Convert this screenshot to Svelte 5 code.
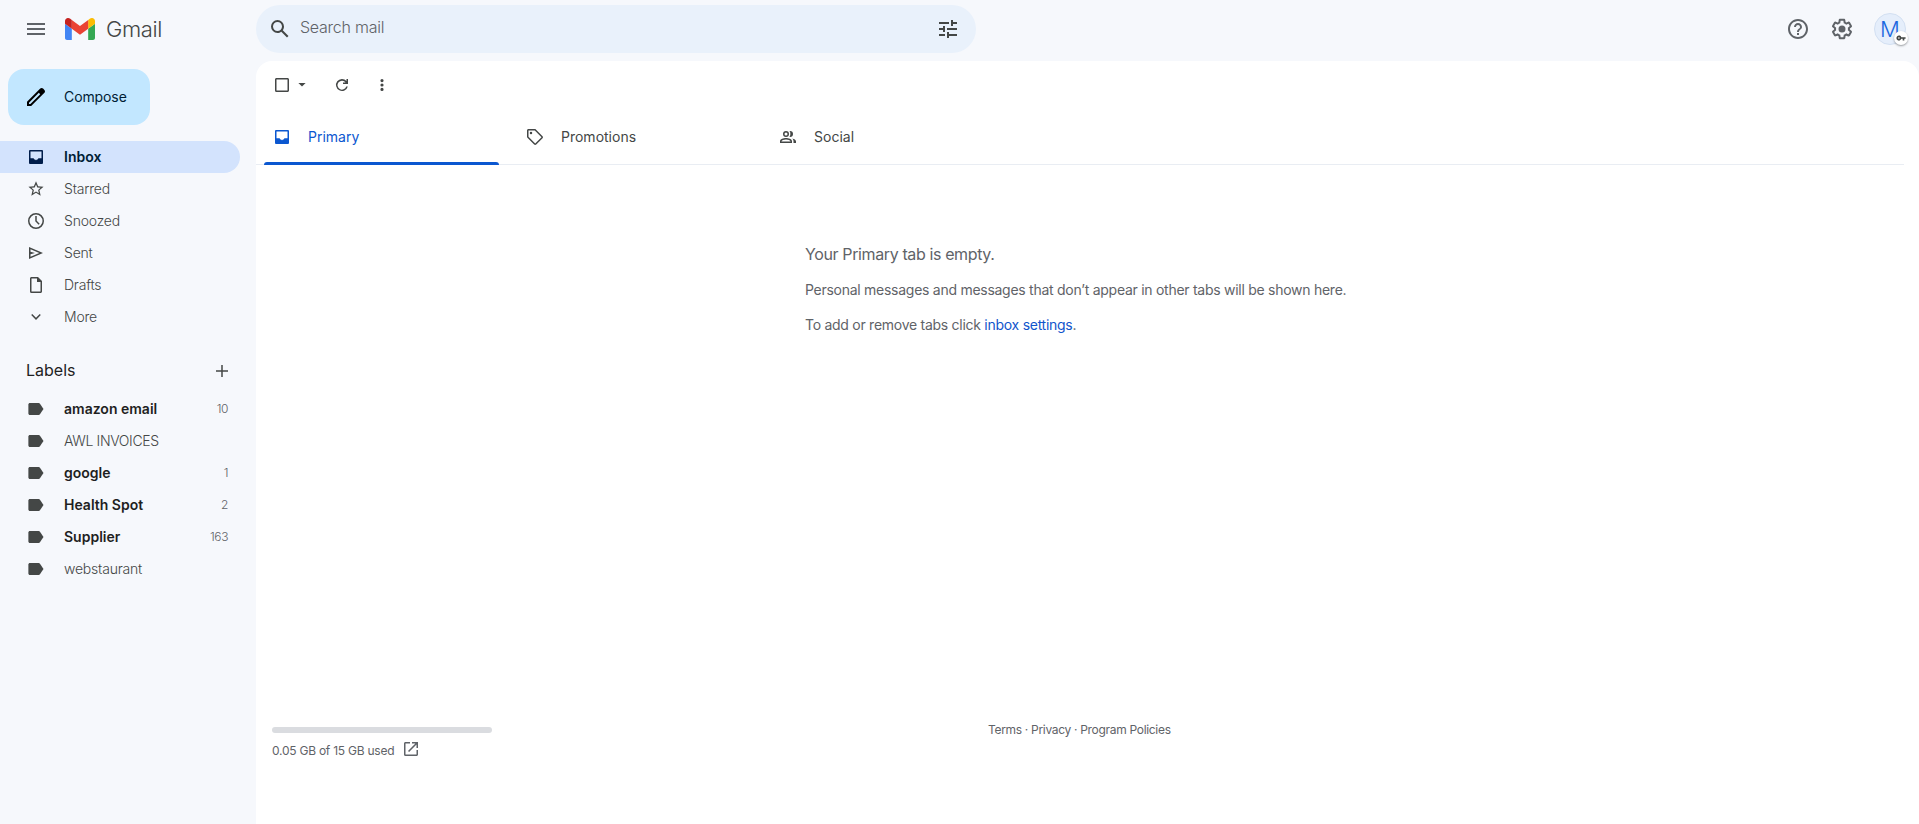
<script lang='ts'>
	type Folder = { name: string, icon: string, active?: boolean }
	type Label = { name: string, count?: number, cls: string }

	const folders: Folder[] = [
		{ name: 'Inbox', icon: 'inbox', active: true },
		{ name: 'Starred', icon: 'star' },
		{ name: 'Snoozed', icon: 'clock' },
		{ name: 'Sent', icon: 'send' },
		{ name: 'Drafts', icon: 'draft' },
		{ name: 'More', icon: 'chevron' },
	]

	const labels: Label[] = [
		{ name: 'amazon email', count: 10, cls: 'unread' },
		{ name: 'AWL INVOICES', cls: 'caps' },
		{ name: 'google', count: 1, cls: 'unread' },
		{ name: 'Health Spot', count: 2, cls: 'unread' },
		{ name: 'Supplier', count: 163, cls: 'unread' },
		{ name: 'webstaurant', cls: '' },
	]

	const tabs = [
		{ name: 'Primary', icon: 'inbox' },
		{ name: 'Promotions', icon: 'tag' },
		{ name: 'Social', icon: 'people' },
	]

	// viewBox + path, drawn with currentColor
	const icons: Record<string, [string, string]> = {
		menu: ['0 0 24 24', 'M3 18h18v-2H3v2zm0-5h18v-2H3v2zm0-7v2h18V6H3z'],
		pencil: ['0 0 24 24', 'M20.41 4.94l-1.35-1.35c-.78-.78-2.05-.78-2.83 0L3 16.82V21h4.18L20.41 7.77c.79-.78.79-2.05 0-2.83zM6.41 19.06L5 19v-1.36l9.82-9.82 1.41 1.41-9.82 9.83z'],
		search: ['0 0 24 24', 'M20.49 19l-5.73-5.73C15.53 12.2 16 10.91 16 9.5A6.5 6.5 0 1 0 9.5 16c1.41 0 2.7-.47 3.77-1.24L19 20.49 20.49 19zM5 9.5C5 7.01 7.01 5 9.5 5S14 7.01 14 9.5 11.99 14 9.5 14 5 11.99 5 9.5z'],
		tune: ['0 0 24 24', 'M3 17v2h6v-2H3zM3 5v2h10V5H3zm10 16v-2h8v-2h-8v-2h-2v6h2zM7 9v2H3v2h4v2h2V9H7zm14 4v-2H11v2h10zm-6-4h2V7h4V5h-4V3h-2v6z'],
		help: ['0 0 24 24', 'M11 18h2v-2h-2v2zm1-16C6.48 2 2 6.48 2 12s4.48 10 10 10 10-4.48 10-10S17.52 2 12 2zm0 18c-4.41 0-8-3.59-8-8s3.59-8 8-8 8 3.59 8 8-3.59 8-8 8zm0-14c-2.21 0-4 1.79-4 4h2c0-1.1.9-2 2-2s2 .9 2 2c0 2-3 1.75-3 5h2c0-2.25 3-2.5 3-5 0-2.21-1.79-4-4-4z'],
		gear: ['0 0 24 24', 'M13.85 22.25h-3.7c-.74 0-1.36-.54-1.45-1.27l-.27-1.89c-.27-.14-.53-.29-.79-.46l-1.8.72c-.7.26-1.47-.03-1.81-.65L2.2 15.53c-.35-.66-.2-1.44.36-1.88l1.53-1.19c-.01-.15-.02-.3-.02-.46 0-.15.01-.31.02-.46l-1.52-1.19c-.59-.45-.74-1.26-.37-1.88l1.85-3.19c.34-.62 1.11-.9 1.79-.63l1.81.73c.26-.17.52-.32.78-.46l.27-1.91c.09-.7.71-1.25 1.44-1.25h3.7c.74 0 1.36.54 1.45 1.27l.27 1.89c.27.14.53.29.79.46l1.8-.72c.71-.26 1.48.03 1.82.65l1.84 3.18c.36.66.2 1.44-.36 1.88l-1.52 1.19c.01.15.02.3.02.46s-.01.31-.02.46l1.52 1.19c.56.45.72 1.23.37 1.86l-1.86 3.22c-.34.62-1.11.9-1.8.63l-1.8-.72c-.26.17-.52.32-.78.46l-.27 1.91c-.1.68-.72 1.22-1.46 1.22zm-3.23-2h2.76l.37-2.55.53-.22c.44-.18.88-.44 1.34-.78l.45-.34 2.38.96 1.38-2.4-2.03-1.58.07-.56c.03-.26.06-.51.06-.78s-.03-.53-.06-.78l-.07-.56 2.03-1.58-1.39-2.4-2.39.96-.45-.35c-.42-.32-.87-.58-1.33-.77l-.52-.22-.37-2.55h-2.76l-.37 2.55-.53.21c-.44.19-.88.44-1.34.79l-.45.33-2.38-.95-1.39 2.39 2.03 1.58-.07.56a7 7 0 0 0-.06.79c0 .26.02.53.06.78l.07.56-2.03 1.58 1.38 2.4 2.39-.96.45.35c.43.33.86.58 1.33.77l.53.22.38 2.55zM12 15.5a3.5 3.5 0 1 0 0-7 3.5 3.5 0 0 0 0 7z'],
		inbox: ['0 0 20 20', 'M4 3h12a1 1 0 0 1 1 1v12a1 1 0 0 1-1 1H4a1 1 0 0 1-1-1V4a1 1 0 0 1 1-1zm.5 1.5v6.8h3c.3.3.6.6.9 1.1h.8c.2.5.4.8.8.8s.6-.3.8-.8h.8c.3-.5.6-.8.9-1.1h3V4.500z'],
		star: ['-1.2 -1 26.4 26.400', 'M22 9.24l-7.19-.62L12 2 9.19 8.63 2 9.24l5.46 4.73L5.82 21 12 17.27 18.18 21l-1.63-7.03L22 9.24zM12 15.4l-3.76 2.27 1-4.28-3.32-2.88 4.38-.38L12 6.1l1.71 4.04 4.38.38-3.32 2.88 1 4.28L12 15.4z'],
		clock: ['0 0 20 20', 'M10 2a8 8 0 1 0 0 16 8 8 0 0 0 0-16zm0 14.500a6.500 6.500 0 1 1 0-13 6.500 6.500 0 0 1 0 13zM10.750 5h-1.500v5.300l3.400 3.400 1.050-1.050-2.950-2.950z'],
		send: ['0 0 20 20', 'M3 16V4l14 6L3 16zm1.500-2.250L13.300 10 4.500 6.250v2.600L9 10l-4.500 1.150v2.600z'],
		draft: ['0 0 20 20', 'M5.500 2H12l4 4v10.500c0 .83-.67 1.500-1.500 1.500h-9A1.500 1.500 0 0 1 4 16.500v-13C4 2.670 4.670 2 5.500 2zm5.500 1.500H5.500v13h9V7H11V3.500z'],
		chevron: ['0 0 20 20', 'M10 12.900 5.200 8.100l1.050-1.050L10 10.800l3.750-3.750 1.050 1.050z'],
		label: ['0 0 20 20', 'M3.900 4h8.800c.5 0 .95.25 1.250.65L17.500 10l-3.550 5.350c-.3.4-.75.65-1.250.65H3.900c-.83 0-1.500-.67-1.500-1.500v-9C2.400 4.670 3.070 4 3.900 4z'],
		plus: ['0 0 20 20', 'M16 10.750h-5.250V16h-1.500v-5.250H4v-1.500h5.250V4h1.500v5.250H16z'],
		tag: ['0 0 20 20', 'M3.500 2h6.300c.4 0 .78.16 1.060.44l6.700 6.700c.58.58.58 1.530 0 2.120l-6.300 6.300c-.59.58-1.540.58-2.120 0l-6.700-6.700A1.500 1.500 0 0 1 2 9.800V3.500C2 2.670 2.670 2 3.500 2zm0 1.500v6.300l6.700 6.700 6.300-6.300-6.700-6.700H3.500zM6 4.750a1.250 1.250 0 1 1 0 2.500 1.250 1.250 0 0 1 0-2.500z'],
		people: ['0 0 20 20', 'M8 4a3 3 0 1 0 0 6 3 3 0 0 0 0-6zm0 1.500a1.500 1.500 0 1 1 0 3 1.500 1.500 0 0 1 0-3zM8 11c-2.500 0-6 1.100-6 3.300V16h12v-1.700C14 12.100 10.500 11 8 11zm-4.500 3.500v-.2c0-.8 2.300-1.800 4.500-1.800s4.500 1 4.500 1.800v.2h-9zM12 4a3 3 0 0 1 0 6l-.5-.1c.6-.8.9-1.800.9-2.900s-.3-2.100-.9-2.900zm2.200 7.400c2.100.5 3.800 1.500 3.800 2.900V16h-2.500v-1.700c0-1.200-.5-2.100-1.300-2.900z'],
		box: ['0 0 20 20', 'M4.500 3h11c.83 0 1.500.67 1.500 1.500v11c0 .83-.67 1.500-1.500 1.500h-11A1.500 1.500 0 0 1 3 15.500v-11C3 3.670 3.670 3 4.500 3zm0 1.500v11h11v-11h-11z'],
		caret: ['0 0 20 20', 'M6.400 8h7.200L10 11.600z'],
		refresh: ['0 0 20 20', 'M16 4v5h-5V7.500h2.600A4.500 4.500 0 1 0 14.250 11.500h1.550A6 6 0 1 1 14.500 6V4z'],
		dots: ['0 0 20 20', 'M10 4a1.600 1.600 0 1 0 0 3.200A1.600 1.600 0 0 0 10 4zm0 4.400a1.600 1.600 0 1 0 0 3.200 1.600 1.600 0 0 0 0-3.200zm0 4.400a1.600 1.600 0 1 0 0 3.200 1.600 1.600 0 0 0 0-3.200z'],
		open: ['0 0 20 20', 'M4.500 3H9v1.500H4.500v11h11V11H17v4.500c0 .83-.67 1.500-1.500 1.500h-11A1.500 1.500 0 0 1 3 15.500v-11C3 3.670 3.670 3 4.500 3zM11 3h6v6h-1.500V5.600l-7.400 7.400L7 11.900l7.400-7.400H11z'],
		key: ['0 0 24 24', 'M12.650 10A6 6 0 1 0 12.650 14H16v4h4v-4h3v-4zM7 14a2 2 0 1 1 0-4 2 2 0 0 1 0 4z'],
	}

	let activeTab = $state('Primary')
</script>

{#snippet icon(name: string, size: number = 20)}
	<svg class='icon' width={size} height={size} viewBox={icons[name][0]} aria-hidden='true'>
		<path d={icons[name][1]} fill='currentColor' fill-rule='evenodd' />
	</svg>
{/snippet}

<div class='app'>
	<header>
		<div class='brand'>
			{@render icon('menu', 24)}
			<svg class='logo' width='30' height='22' viewBox='52 42 88 66' preserveAspectRatio='none'>
				<path fill='#4285f4' d='M58 108h14V74L52 59v43c0 3.320 2.690 6 6 6' />
				<path fill='#34a853' d='M120 108h14c3.320 0 6-2.690 6-6V59l-20 15' />
				<path fill='#fbbc04' d='M120 48v26l20-15v-8c0-7.420-8.470-11.650-14.400-7.200' />
				<path fill='#ea4335' d='M72 74V48l24 18 24-18v26L96 92' />
				<path fill='#c5221f' d='M52 51v8l20 15V48l-5.600-4.200c-5.940-4.450-14.400-.22-14.400 7.200' />
			</svg>
			<span class='wordmark'>Gmail</span>
		</div>
		<div class='search'>
			{@render icon('search', 24)}
			<span class='placeholder'>Search mail</span>
			{@render icon('tune', 24)}
		</div>
		<div class='account'>
			{@render icon('help', 24)}
			{@render icon('gear', 24)}
			<div class='avatar'>
				<span>M</span>
				<div class='badge'>{@render icon('key', 10)}</div>
			</div>
		</div>
	</header>

	<div class='body'>
		<aside>
			<button class='compose'>
				{@render icon('pencil', 24)}
				<span>Compose</span>
			</button>
			<nav>
				{#each folders as folder}
					<div class='row' class:active={folder.active}>
						{@render icon(folder.icon)}
						<span class='name'>{folder.name}</span>
					</div>
				{/each}
			</nav>
			<div class='labels-head'>
				<span>Labels</span>
				{@render icon('plus')}
			</div>
			<nav>
				{#each labels as label}
					<div class='row {label.cls}'>
						{@render icon('label')}
						<span class='name'>{label.name}</span>
						<span class='count'>{label.count ?? ''}</span>
					</div>
				{/each}
			</nav>
		</aside>

		<main>
			<div class='toolbar'>
				{@render icon('box')}
				<span class='select-caret'>{@render icon('caret')}</span>
				<span class='reload'>{@render icon('refresh')}</span>
				{@render icon('dots')}
			</div>

			<div class='tabs'>
				{#each tabs as tab}
					<button class='tab' class:selected={activeTab === tab.name} onclick={() => activeTab = tab.name}>
						{@render icon(tab.icon)}
						<span>{tab.name}</span>
					</button>
				{/each}
			</div>

			<div class='empty'>
				<p class='title'>Your Primary tab is empty.</p>
				<p class='detail'>Personal messages and messages that don’t appear in other tabs will be shown here.</p>
				<p class='hint'>To add or remove tabs click <span class='link'>inbox settings</span>.</p>
			</div>

			<footer>
				<div class='storage'>
					<div class='meter'></div>
					<div class='usage'>
						<span>0.05 GB of 15 GB used</span>
						{@render icon('open')}
					</div>
				</div>
				<div class='terms'>Terms · Privacy · Program Policies</div>
			</footer>
		</main>
	</div>
</div>

<style>
	:global(body) {
		margin: 0;
		overflow: hidden;
	}

	.app {
		display: flex;
		flex-direction: column;
		height: 100vh;
		background: #f6f8fc;
		color: #444746;
		font-family: Inter, Roboto, sans-serif;
		font-size: 14px;
	}

	.icon {
		display: block;
		flex: none;
	}

	button {
		border: 0;
		padding: 0;
		background: none;
		color: inherit;
		font: inherit;
	}

	header {
		display: flex;
		align-items: center;
		height: 61px;
		flex: none;
	}

	.brand {
		display: flex;
		align-items: center;
		box-sizing: border-box;
		width: 256px;
		padding: 0 0 3px 24px;
		color: #5f6368;
	}

	.logo {
		margin-left: 17px;
	}

	.wordmark {
		margin-left: 11px;
		font-size: 22px;
		font-weight: 350;
		letter-spacing: -0.4px;
		color: #444746;
	}

	.search {
		display: flex;
		align-items: center;
		box-sizing: border-box;
		width: 720px;
		height: 48px;
		margin-bottom: 3px;
		padding: 0 16px 0 12px;
		border-radius: 24px;
		background: #e9f1fb;
	}

	.placeholder {
		flex: 1;
		margin: -4px 0 0 8px;
		font-size: 16px;
		font-weight: 350;
		letter-spacing: -0.25px;
		color: #5f6368;
	}

	.account {
		display: flex;
		align-items: center;
		gap: 20px;
		margin: 0 13px 3px auto;
		color: #5f6368;
	}

	.avatar {
		position: relative;
		display: flex;
		align-items: center;
		justify-content: center;
		box-sizing: border-box;
		width: 32px;
		height: 32px;
		border: 1px solid #d3e0f2;
		border-radius: 50%;
		background: #e5eefb;
		color: #1a67e0;
		font-size: 22px;
		font-weight: 350;
	}

	.badge {
		position: absolute;
		right: -3px;
		bottom: -1px;
		display: flex;
		align-items: center;
		justify-content: center;
		width: 14px;
		height: 14px;
		border-radius: 50%;
		background: #fff;
		box-shadow: 0 1px 2px rgba(60, 64, 67, 0.5);
		color: #444746;
	}

	.body {
		display: flex;
		flex: 1;
		min-height: 0;
	}

	aside {
		width: 256px;
		flex: none;
		padding-top: 8px;
	}

	aside, main {
		box-sizing: border-box;
	}

	.compose {
		display: flex;
		align-items: center;
		gap: 16px;
		width: 142px;
		height: 56px;
		margin: 0 0 16px 8px;
		padding-left: 16px;
		border-radius: 16px;
		background: #c2e7ff;
		color: #001d35;
		letter-spacing: -0.1px;
	}

	.compose .icon {
		color: #000;
	}

	.compose span, .tab span {
		margin-bottom: 2px;
	}

	.row {
		display: flex;
		align-items: center;
		box-sizing: border-box;
		width: 240px;
		height: 32px;
		padding: 0 12px 0 26px;
		border-radius: 0 16px 16px 0;
	}

	.name {
		flex: 1;
		margin: 0 0 2px 18px;
		font-weight: 350;
		letter-spacing: -0.2px;
	}

	.active {
		background: #d3e3fd;
		color: #001d4a;
	}

	.active .name {
		color: #001d35;
		font-weight: 600;
		letter-spacing: 0;
	}

	.unread .name {
		font-weight: 600;
		letter-spacing: 0;
		color: #1f1f1f;
	}

	.caps .name {
		letter-spacing: -0.35px;
	}

	.count {
		margin-bottom: 2px;
		font-size: 12px;
		font-weight: 350;
		letter-spacing: -0.4px;
		color: #5f6368;
	}

	.labels-head {
		display: flex;
		align-items: center;
		justify-content: space-between;
		box-sizing: border-box;
		width: 232px;
		height: 44px;
		margin-top: 16px;
		padding-left: 26px;
		color: #1f1f1f;
		font-size: 16px;
	}

	.labels-head span {
		margin-bottom: 2px;
	}

	.labels-head .icon {
		color: #444746;
	}

	main {
		display: flex;
		flex: 1;
		flex-direction: column;
		border-radius: 16px 16px 0 0;
		background: #fff;
	}

	.toolbar {
		display: flex;
		align-items: center;
		height: 48px;
		padding-left: 16px;
	}

	.reload {
		margin: 0 20px;
	}

	.tabs {
		display: flex;
		box-sizing: border-box;
		height: 56px;
		margin-right: 15px;
		border-bottom: 1px solid #e9edf3;
	}

	.tab {
		position: relative;
		display: flex;
		align-items: center;
		gap: 16px;
		width: 253px;
		height: 56px;
		padding-left: 16px;
	}

	.selected {
		color: #0b57d0;
	}

	.selected::after {
		content: '';
		position: absolute;
		left: 8px;
		right: 10px;
		bottom: 0;
		height: 3px;
		border-radius: 3px 3px 0 0;
		background: #0b57d0;
	}

	.empty {
		margin: 77px 0 0 549px;
		color: #5f6368;
		letter-spacing: -0.27px;
	}

	.empty p {
		margin: 0;
		line-height: 24px;
	}

	.empty .title {
		margin-bottom: 12px;
		font-size: 16px;
		letter-spacing: -0.38px;
	}

	.empty .detail {
		margin-bottom: 11px;
	}

	.link {
		color: #1155cc;
	}

	footer {
		display: flex;
		align-items: flex-start;
		height: 97px;
		margin-top: auto;
		padding-left: 16px;
		color: #5f6368;
		font-size: 12px;
		letter-spacing: -0.24px;
	}

	.storage {
		width: 716px;
	}

	.meter {
		width: 220px;
		height: 6px;
		border-radius: 3px;
		background: #dadce0;
	}

	.usage {
		display: flex;
		align-items: center;
		gap: 7px;
		margin-top: 6px;
	}

	.usage span {
		margin-top: 3px;
	}

	.terms {
		line-height: 16px;
		margin-top: -5px;
		letter-spacing: -0.31px;
	}
</style>
